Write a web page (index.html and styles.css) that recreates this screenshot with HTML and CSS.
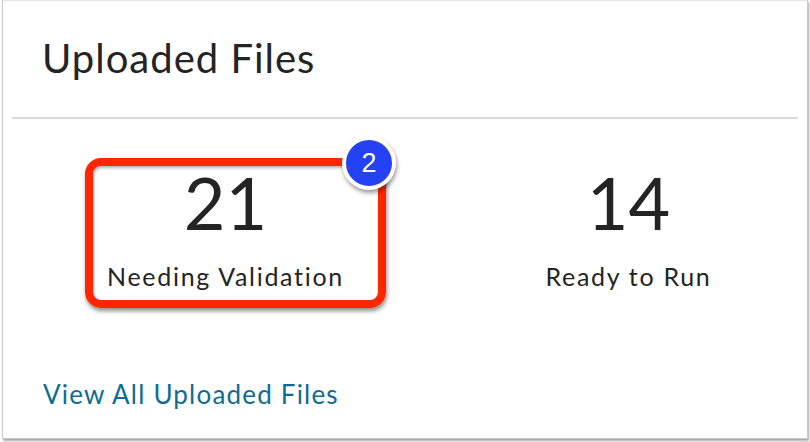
FILE: index.html
```html
<!DOCTYPE html>
<html lang="en">
<head>
    <meta charset="UTF-8">
    <meta name="viewport" content="width=device-width, initial-scale=1.0">
    <title>Uploaded Files</title>
    <link rel="stylesheet" href="styles.css">
</head>
<body>
    <div class="card">
        <div class="card-header">
            <h2>Uploaded Files</h2>
        </div>
        <div class="divider"></div>

        <div class="stats">
            <div class="stat">
                <div class="stat-number">21</div>
                <div class="stat-label">Needing Validation</div>
            </div>
            <div class="stat">
                <div class="stat-number">14</div>
                <div class="stat-label">Ready to Run</div>
            </div>
        </div>

        <a class="view-all" href="#">View All Uploaded Files</a>

        <!-- annotation overlay -->
        <div class="callout"></div>
        <div class="step-badge">2</div>
    </div>
</body>
</html>
```

FILE: styles.css
```css
body {
    margin: 0;
    padding: 0 2px 3px 2px;
    background: #fff;
    font-family: Lato, "Open Sans", sans-serif;
    color: #242424;
}
.card {
    position: relative;
    height: 437px;
    background: #fff;
    border: 1px solid #c9c9c9;
    border-top-color: #e4e4e4;
    box-shadow: 1px 2px 2px rgba(0, 0, 0, 0.35);
}
.card-header {
    height: 116px;
    padding-left: 39px;
}
.card-header h2 {
    margin: 0;
    padding-top: 33px;
    font-size: 40px;
    font-weight: 400;
    letter-spacing: 1px;
}
.divider {
    height: 2px;
    margin: 0 9px;
    background: #dcdbe3;
}
.stats {
    display: grid;
    grid-template-columns: 403px 403px;
    margin-left: 21px;
    padding-top: 43px;
}
.stat {
    text-align: center;
}
.stat-number {
    font-size: 72px;
    line-height: 80px;
}
.stat-label {
    margin-top: 19px;
    font-size: 25px;
    letter-spacing: 1.7px;
}
.view-all {
    display: inline-block;
    margin: 87px 0 0 40px;
    color: #0e6c93;
    font-size: 26px;
    letter-spacing: 1.2px;
    text-decoration: none;
}
.callout {
    position: absolute;
    left: 82px;
    top: 157px;
    width: 285px;
    height: 134px;
    border: 8px solid #ff2600;
    border-radius: 16px;
    box-shadow: 1px 3px 4px rgba(0, 0, 0, 0.45), inset 1px 2px 3px rgba(0, 0, 0, 0.3);
}
.step-badge {
    position: absolute;
    left: 339px;
    top: 135px;
    width: 46px;
    height: 46px;
    border: 4px solid #fff;
    border-radius: 50%;
    background: #2541f5;
    box-shadow: 1px 3px 4px rgba(0, 0, 0, 0.4);
    color: #fff;
    font-family: "Liberation Sans", Arial, sans-serif;
    font-size: 27px;
    line-height: 46px;
    text-align: center;
}
```
